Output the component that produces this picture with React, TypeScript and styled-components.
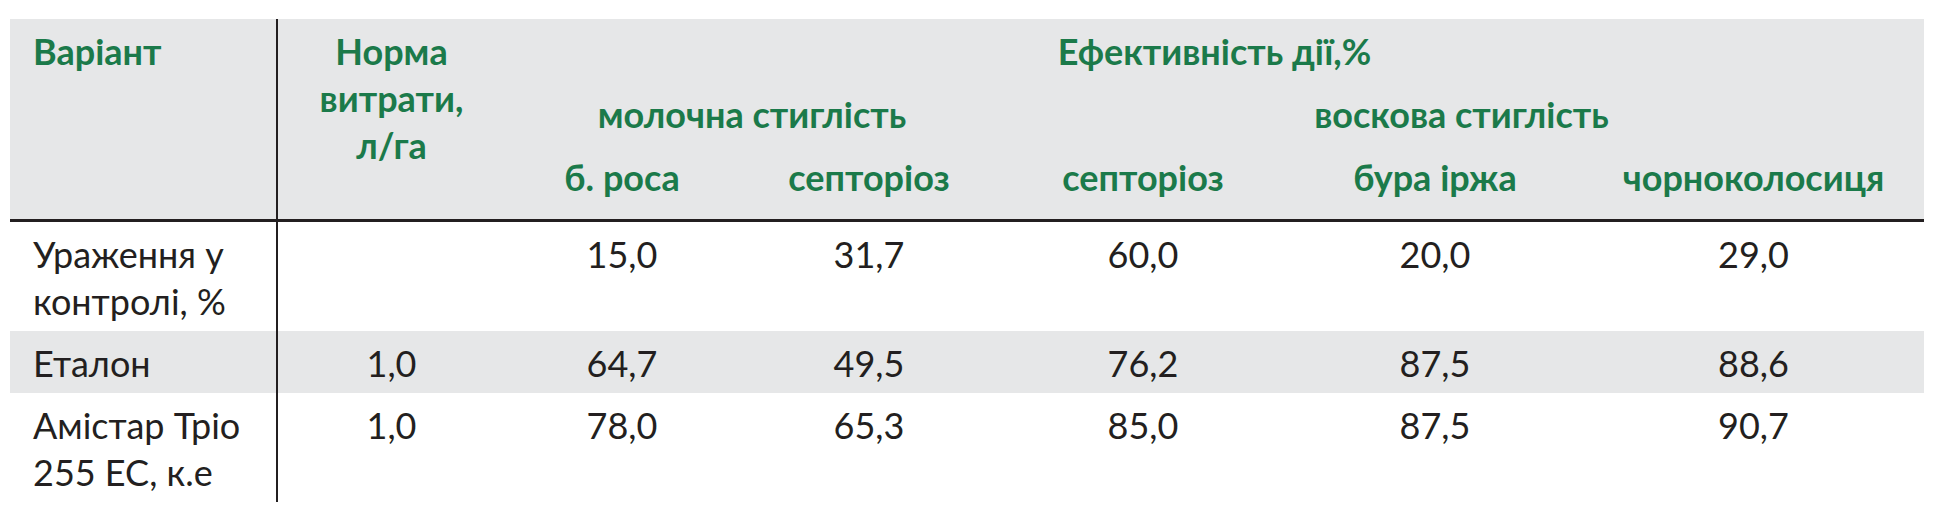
import styled, { createGlobalStyle } from 'styled-components';

const COLUMNS = '268px 227px 234px 260px 288px 296px 341px';
const GREEN = '#1b7a4a';
const INK = '#231f20';
const SHADE = '#e6e7e8';

type Row = { name: string[]; rate: string; values: string[]; shaded?: boolean };

const rows: Row[] = [
  { name: ['Ураження у', 'контролі, %'], rate: '', values: ['15,0', '31,7', '60,0', '20,0', '29,0'] },
  { name: ['Еталон'], rate: '1,0', values: ['64,7', '49,5', '76,2', '87,5', '88,6'], shaded: true },
  { name: ['Амістар Тріо', '255 ЕС, к.е'], rate: '1,0', values: ['78,0', '65,3', '85,0', '87,5', '90,7'] },
];

const diseases = ['б. роса', 'септоріоз', 'септоріоз', 'бура іржа', 'чорноколосиця'];

export default function App() {
  return (
    <>
      <GlobalStyle />
      <Page>
        <Table>
          <Head>
            <HeadCell $col="1" $row="1 / 4" $top $left $divider>
              Варіант
            </HeadCell>
            <HeadCell $col="2" $row="1 / 4" $top>
              Норма
              <br />
              витрати,
              <br />
              л/га
            </HeadCell>
            <HeadCell $col="3 / 8" $row="1" $top>
              Ефективність дії,%
            </HeadCell>
            <HeadCell $col="3 / 5" $row="2">
              молочна стиглість
            </HeadCell>
            <HeadCell $col="5 / 8" $row="2">
              воскова стиглість
            </HeadCell>
            {diseases.map((d, i) => (
              <HeadCell key={i} $col={String(i + 3)} $row="3">
                {d}
              </HeadCell>
            ))}
          </Head>

          {rows.map((r, i) => (
            <BodyRow key={i} $shaded={r.shaded}>
              <NameCell>
                {r.name.map((line, j) => (
                  <div key={j}>{line}</div>
                ))}
              </NameCell>
              <ValueCell>{r.rate}</ValueCell>
              {r.values.map((v, j) => (
                <ValueCell key={j}>{v}</ValueCell>
              ))}
            </BodyRow>
          ))}
        </Table>
      </Page>
    </>
  );
}

const GlobalStyle = createGlobalStyle`
  html, body {
    margin: 0;
    background: #fff;
  }

  body {
    font-family: Lato, 'Open Sans', 'DejaVu Sans', sans-serif;
  }
`;

const Page = styled.div`
  padding: 19px 0 0 10px;
`;

const Table = styled.div`
  width: 1914px;
`;

const Head = styled.div`
  display: grid;
  grid-template-columns: ${COLUMNS};
  grid-template-rows: 72px 63px 65px;

  background-color: ${SHADE};
  border-bottom: 3px solid ${INK};
`;

const HeadCell = styled.div<{ $col: string; $row: string; $top?: boolean; $left?: boolean; $divider?: boolean }>`
  grid-column: ${(p) => p.$col};
  grid-row: ${(p) => p.$row};

  padding-top: ${(p) => (p.$top ? '9px' : '0')};
  padding-left: ${(p) => (p.$left ? '23px' : '0')};
  border-right: ${(p) => (p.$divider ? `2px solid ${INK}` : 'none')};

  color: ${GREEN};
  font-weight: 700;
  font-size: 36px;
  line-height: 47px;
  text-align: ${(p) => (p.$left ? 'left' : 'center')};
  white-space: nowrap;
`;

const BodyRow = styled.div<{ $shaded?: boolean }>`
  display: grid;
  grid-template-columns: ${COLUMNS};

  background-color: ${(p) => (p.$shaded ? SHADE : 'transparent')};
`;

const Cell = styled.div`
  padding: 9px 0 6px;

  color: ${INK};
  font-weight: 400;
  font-size: 36px;
  line-height: 47px;
  white-space: nowrap;
`;

const NameCell = styled(Cell)`
  padding-left: 23px;
  border-right: 2px solid ${INK};
`;

const ValueCell = styled(Cell)`
  text-align: center;
`;
